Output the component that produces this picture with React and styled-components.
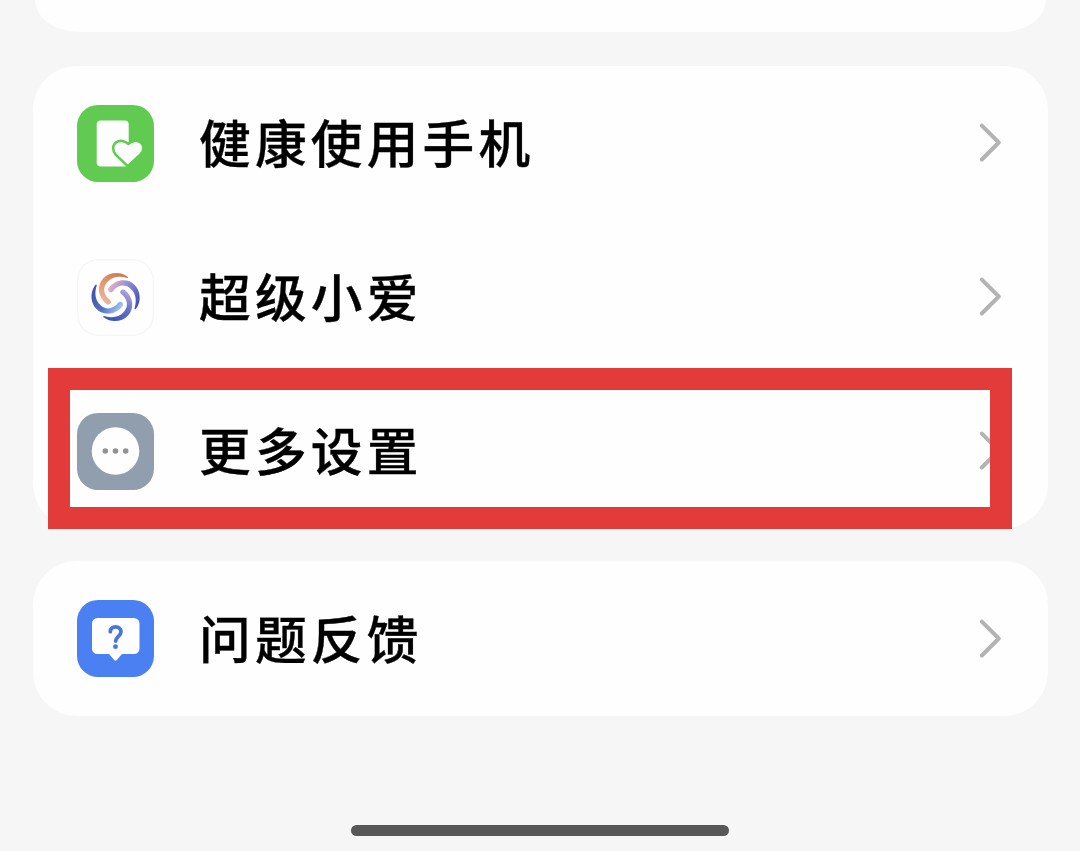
import React from "react";
import styled, { createGlobalStyle } from "styled-components";

const GlobalStyle = createGlobalStyle`
  * { box-sizing: border-box; }
  body { margin: 0; background: #f6f6f6; }
`;

const Screen = styled.main`
  width: 1080px;
  height: 851px;
  padding: 0 32px 15px 33px;
  display: flex;
  flex-direction: column;
  overflow: hidden;
  background: #f6f6f6;
  font-family: "Noto Sans CJK SC", sans-serif;
`;

const PreviousCard = styled.section`
  height: 32px;
  margin: 0 2px 34px;
  flex-shrink: 0;
  background: #fefefe;
  border-radius: 0 0 44px 44px / 0 0 32px 32px;
`;

const Card = styled.section`
  position: relative;
  flex-shrink: 0;
  margin-bottom: ${(p) => p.$gap || 0}px;
  background: #fefefe;
  border-radius: 44px;
`;

const Row = styled.div`
  height: ${(p) => p.$height || 154}px;
  padding: 0 46px 0 44px;
  display: flex;
  align-items: center;
`;

const IconSvg = styled.svg`
  width: 77px;
  height: 77px;
  flex-shrink: 0;
`;

const Label = styled.span`
  flex: 1;
  margin-left: 45px;
  padding-bottom: 4px;
  color: #000;
  font-size: 51.7px;
  font-weight: 500;
  line-height: 76px;
  letter-spacing: 4.2px;
  -webkit-text-stroke: 0.35px #000;
  white-space: nowrap;
`;

const ChevronSvg = styled.svg`
  width: 24px;
  height: 42px;
  flex-shrink: 0;
`;

const Highlight = styled.div`
  position: absolute;
  left: 15px;
  top: 302px;
  width: 964px;
  height: 161px;
  border: 22px solid #e23b3a;
  pointer-events: none;
`;

const HomeBar = styled.div`
  width: 378px;
  height: 11px;
  margin: auto 0 0 318px;
  border-radius: 6px;
  background: #575757;
`;

function Chevron() {
  return (
    <ChevronSvg viewBox="0 0 24 42" fill="none" stroke="#b3b3b3" strokeWidth="4" strokeLinecap="round" strokeLinejoin="round">
      <path d="M3.8 3.7 20.8 20.5 3.8 37.5" />
    </ChevronSvg>
  );
}

function PhoneHealthIcon() {
  const heart = "M50.8 58.4 40.4 48.4C34.2 41.4 42.6 33.2 51.4 41.5 60 33.2 68.6 41.4 62 48Z";
  return (
    <IconSvg viewBox="0 0 77 77">
      <rect width="77" height="77" rx="21" fill="#60cb50" />
      <rect x="19.7" y="15.5" width="32" height="46" rx="4" fill="#fefefe" />
      <path d={heart} fill="#60cb50" stroke="#60cb50" strokeWidth="6.8" strokeLinejoin="round" />
      <path d={heart} fill="#fefefe" stroke="#fefefe" strokeWidth="1.6" strokeLinejoin="round" />
    </IconSvg>
  );
}

const ARM =
  "M11.6-20.6C4.5-26-6.5-25-12.3-18.8-19-12-18 0-9.2 6.9-6.3 8.8-3 5.2-5.6 2.9-12.3-2-13.3-10-8-15.3-3-20.6 4-21.2 11.5-18.9 12.8-18.9 12.6-20 11.6-20.6Z";

function AssistantIcon() {
  return (
    <IconSvg viewBox="0 0 77 77">
      <defs>
        <linearGradient id="orange" x1="10" y1="-22" x2="-8" y2="8" gradientUnits="userSpaceOnUse">
          <stop stopColor="#cd774c" /><stop offset=".55" stopColor="#e39b72" /><stop offset="1" stopColor="#edb6a5" />
        </linearGradient>
        <linearGradient id="violet" x1="10" y1="-22" x2="-8" y2="8" gradientUnits="userSpaceOnUse">
          <stop stopColor="#3f4daf" /><stop offset=".5" stopColor="#8586cf" /><stop offset="1" stopColor="#e2b3cb" />
        </linearGradient>
        <linearGradient id="indigo" x1="10" y1="-22" x2="-8" y2="8" gradientUnits="userSpaceOnUse">
          <stop stopColor="#3852b5" /><stop offset=".55" stopColor="#6671c5" /><stop offset="1" stopColor="#b5a3d8" />
        </linearGradient>
        <linearGradient id="blue" x1="10" y1="-22" x2="-8" y2="8" gradientUnits="userSpaceOnUse">
          <stop stopColor="#4350a8" /><stop offset=".55" stopColor="#5573ca" /><stop offset="1" stopColor="#a9cbef" />
        </linearGradient>
      </defs>
      <rect x=".75" y=".75" width="75.5" height="75.5" rx="20.5" fill="#fefefe" stroke="#f6f6f6" strokeWidth="1.5" />
      <g transform="translate(38.6 38)">
        <path d={ARM} fill="url(#orange)" />
        <path d={ARM} fill="url(#violet)" transform="rotate(90)" />
        <path d={ARM} fill="url(#indigo)" transform="rotate(180)" />
        <path d={ARM} fill="url(#blue)" transform="rotate(270)" />
      </g>
    </IconSvg>
  );
}

function MoreIcon() {
  return (
    <IconSvg viewBox="0 0 77 77">
      <rect width="77" height="77" rx="21" fill="#909eae" />
      <circle cx="38.5" cy="38" r="23.8" fill="#fefefe" />
      <g fill="#929292">
        <circle cx="28.3" cy="38" r="2.8" />
        <circle cx="38.5" cy="38" r="2.8" />
        <circle cx="48.7" cy="38" r="2.8" />
      </g>
    </IconSvg>
  );
}

function FeedbackIcon() {
  return (
    <IconSvg viewBox="0 0 77 77">
      <rect width="77" height="77" rx="21" fill="#4a80f2" />
      <path d="M20.5 18H57a5.5 5.5 0 0 1 5.5 5.5v25A5.5 5.5 0 0 1 57 54H45l-5.2 6a1.7 1.7 0 0 1-2.6 0L32 54H20.5a5.5 5.5 0 0 1-5.5-5.5v-25a5.5 5.5 0 0 1 5.5-5.5Z" fill="#fefefe" />
      <path d="M33.3 31.7C33.3 25 44 25.3 44 31.8c0 4.2-5.3 5-5.3 9.3" fill="none" stroke="#4777dd" strokeWidth="3.8" strokeLinecap="round" />
      <circle cx="38.5" cy="46.7" r="2.4" fill="#4777dd" />
    </IconSvg>
  );
}

function SettingRow({ icon, label, height }) {
  return (
    <Row $height={height}>
      {icon}
      <Label>{label}</Label>
      <Chevron />
    </Row>
  );
}

export default function App() {
  return (
    <>
      <GlobalStyle />
      <Screen>
        <PreviousCard />
        <Card $gap={33}>
          <SettingRow icon={<PhoneHealthIcon />} label="健康使用手机" />
          <SettingRow icon={<AssistantIcon />} label="超级小爱" />
          <SettingRow icon={<MoreIcon />} label="更多设置" />
          <Highlight />
        </Card>
        <Card>
          <SettingRow icon={<FeedbackIcon />} label="问题反馈" height={155} />
        </Card>
        <HomeBar />
      </Screen>
    </>
  );
}
